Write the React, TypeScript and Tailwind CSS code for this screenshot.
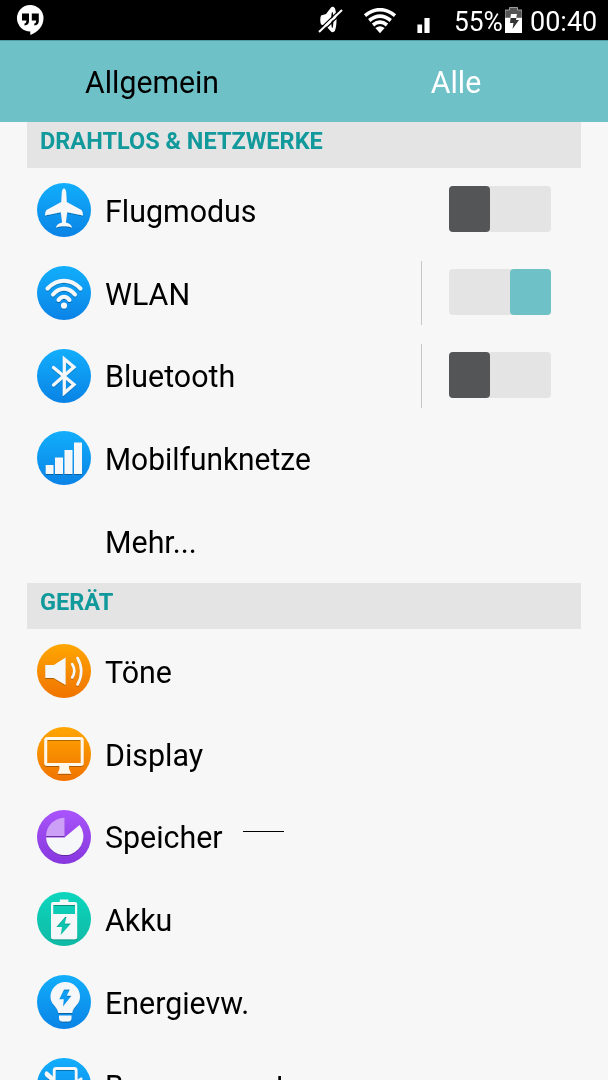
import type { ReactNode } from "react";

interface SettingRowProps {
    label: string;
    icon?: ReactNode;
    toggle?: "on" | "off";
    divider?: boolean;
    condensed?: boolean;
    children?: ReactNode;
}

const gradients = {
    blue: ["#12aefc", "#0a83e6"],
    orange: ["#ffa602", "#f07300"],
    purple: ["#a955fb", "#8637dd"],
    green: ["#0cd6be", "#10b9a5"],
};

function RoundIcon({ color, children }: { color: keyof typeof gradients; children: ReactNode }) {
    const [from, to] = gradients[color];
    return (
        <svg viewBox="0 0 54 54" className="h-[54px] w-[54px] shrink-0">
            <defs>
                <linearGradient id={`disc-${color}`} x1="0" y1="0" x2="0" y2="1">
                    <stop offset="0" stopColor={from} />
                    <stop offset="1" stopColor={to} />
                </linearGradient>
                <filter id="drop" x="-20%" y="-20%" width="140%" height="140%">
                    <feDropShadow dx="0" dy="1" stdDeviation="0.6" floodColor="#000" floodOpacity="0.3" />
                </filter>
            </defs>
            <circle cx="27" cy="27" r="27" fill={`url(#disc-${color})`} />
            <g filter="url(#drop)" fill="#f5f7f9">{children}</g>
        </svg>
    );
}

const PlaneIcon = () => (
    <RoundIcon color="blue">
        <path d="M27 5.500c1.400 0 2.200 2 2.300 5l.5 8.500L44 26.700c1.300.8 1.900 2.400 1.900 5.800L30.200 29.300 28.900 39.500c3.400.8 5.500 2 6.200 5.200-2.600-1-5.300-1.400-8.100-1.400s-5.500.4-8.100 1.400c.7-3.200 2.800-4.400 6.200-5.200L23.800 29.300 8.100 32.500c0-3.400.6-5 1.900-5.800L24.200 19l.5-8.500c.1-3 .9-5 2.300-5z" />
    </RoundIcon>
);

const WlanIcon = () => (
    <RoundIcon color="blue">
        <g fill="none" stroke="#f5f7f9" strokeWidth="4" strokeLinecap="round">
            <path d="M10.500 22.500Q18 14.800 27 14.800T43.500 22.500" />
            <path d="M16 28.500Q21 22.800 27 22.800T38 28.500" />
            <path d="M21.500 34Q24 30.800 27 30.800T32.500 34" />
        </g>
        <circle cx="27" cy="39.500" r="3.100" />
    </RoundIcon>
);

const BluetoothIcon = () => (
    <RoundIcon color="blue">
        <path d="M16.500 18.500L37 35.500 27.300 44V10L37 18 16.500 36" fill="none" stroke="#f5f7f9" strokeWidth="3.200" strokeLinejoin="miter" strokeLinecap="round" />
    </RoundIcon>
);

const MobileIcon = () => (
    <RoundIcon color="blue">
        <path d="M8.700 34h7.800v9H8.700zM18 26.500h8V43h-8zM27.500 19h8v24h-8zM37 11.500h8V43h-8z" />
    </RoundIcon>
);

const SoundIcon = () => (
    <RoundIcon color="orange">
        <path d="M8.300 21h8.500L28.600 13.500v27.500L16.800 34H8.300z" />
        <g fill="none" stroke="#f5f7f9" strokeWidth="2.600" strokeLinecap="round">
            <path d="M35.200 20q4.200 7 0 13.500" />
            <path d="M40.500 14q7.500 13.300 0 26.500" />
        </g>
    </RoundIcon>
);

const DisplayIcon = () => (
    <RoundIcon color="orange">
        <rect x="8.700" y="11.500" width="36.500" height="26" rx="1.500" fill="none" stroke="#fff8ea" strokeWidth="3" />
        <path d="M22.500 38h9.500v4l2.300 4.800H20.500l2-4.800z" fill="#fff8ea" />
    </RoundIcon>
);

const StorageIcon = () => (
    <RoundIcon color="purple">
        <path d="M27.500 7.800V26H9A18.500 18.500 0 0 1 27.500 7.800z" fill="#cda0f8" />
        <path d="M9 27.500h18.500L42.500 15A18.700 18.700 0 1 1 9 27.500z" />
    </RoundIcon>
);

const BatteryIcon = () => (
    <RoundIcon color="green">
        <path fillRule="evenodd" d="M22.800 10V7.500h8.600V10h6.800q2 0 2 2v33.200q0 2-2 2H16q-2 0-2-2V12q0-2 2-2zM16.200 13v9h21.800v-9zM28 25l-8.700 10h5.700l-1.300 8L34 31.500h-6.200l1.700-6.500z" />
    </RoundIcon>
);

const BulbIcon = () => (
    <RoundIcon color="blue">
        <path fillRule="evenodd" d="M28 7A14.700 14.700 0 0 1 43 21.700c0 8-7 9.500-7.800 16.300H21.300c-.7-6.800-7.800-8.300-7.800-16.300A14.700 14.700 0 0 1 28 7zM27 14.500l-4.700 9.800h4.500l-.8 7.200 8.500-10.700h-4.700l3-6.300z" />
        <path d="M22 40.500h12.500V43q0 3.500-3.500 3.500h-5.500Q22 46.500 22 43z" />
    </RoundIcon>
);

const MotionIcon = () => (
    <RoundIcon color="blue">
        <rect x="17.200" y="10.500" width="22" height="34" rx="2" fill="none" stroke="#f5f7f9" strokeWidth="2.800" />
        <path d="M8 14.500q1-2 3-.5l5 4.500v6L8.800 18.500q-1.800-2-.8-4zM40.500 21.500l3-2q2.500-.5 2 2l-5 6z" />
    </RoundIcon>
);

function Toggle({ state }: { state: "on" | "off" }) {
    return (
        <div className={`mb-[2px] flex h-[46px] w-[102px] rounded-[4px] bg-[#e4e4e4] ${state === "on" ? "justify-end" : "justify-start"}`}>
            <div className={`h-full w-[41px] rounded-[4px] ${state === "on" ? "bg-[#6dc1c7]" : "bg-[#545557]"}`} />
        </div>
    );
}

function SettingRow({ label, icon, toggle, divider, condensed, children }: SettingRowProps) {
    return (
        <div className="flex h-[82.75px] items-center pr-[57px] pl-[37px]">
            <div className="w-[54px] shrink-0">{icon}</div>
            <span className={`ml-[14px] origin-left pt-[4px] text-[31px] whitespace-nowrap text-black ${condensed ? "scale-x-[0.965]" : "scale-x-[0.98]"}`}>{label}</span>
            {children}
            <div className="ml-auto flex items-center">
                {divider && <div className="mr-[27px] h-[64px] w-px bg-[#c6c6c6]" />}
                {toggle && <Toggle state={toggle} />}
            </div>
        </div>
    );
}

function SectionHeader({ title }: { title: string }) {
    return (
        <div className="mr-[27px] ml-[27px] flex h-[46px] items-start bg-[#e4e4e4] pl-[13px]">
            <span className="origin-left scale-x-[0.98] pt-[2px] text-[24px] leading-[34px] font-bold whitespace-nowrap text-[#12999b]">{title}</span>
        </div>
    );
}

function StatusBar() {
    return (
        <div className="flex h-[40px] items-center bg-black text-white">
            <svg viewBox="0 0 28 32" className="ml-[16px] h-[32px] w-[28px]">
                <path d="M14 1a13.300 13.300 0 0 1 13.500 13.300C27.500 22 22 28.500 14.300 31v-3.600A13.200 13.200 0 0 1 14 1z" fill="#fff" />
                <path d="M6 9.500h7v7.500q0 4-4.500 4.500v-2q2-.5 2-3H6zM15.800 9.500h7v7.500q0 4-4.500 4.500v-2q2-.5 2-3h-4.500z" fill="#000" />
            </svg>
            {/* muted ringer */}
            <svg viewBox="0 0 26 28" className="ml-[274px] h-[28px] w-[26px]">
                <path d="M3 9.500l5-1.500 5-6.500c1-1 3-1 4 1 2 6 2 17 0 22-1 2-3 2-4 1L8 20l-5-1.500c-1-3-1-6 0-9z" fill="#fff" />
                <ellipse cx="14.300" cy="14" rx="1.100" ry="8" fill="#000" />
                <path d="M0 24.500L23 2.500M2.500 27.500L25.500 5.500" stroke="#000" strokeWidth="1.200" />
                <path d="M1 26L24 4" stroke="#fff" strokeWidth="2" />
            </svg>
            <svg viewBox="0 0 34 26" className="mt-[2px] ml-[19px] h-[26px] w-[34px]">
                <g fill="none" stroke="#fff" strokeWidth="3.600">
                    <path d="M2 7.600Q17-4.200 32 7.600" />
                    <path d="M6.200 12.500Q17 3.900 27.800 12.500" />
                    <path d="M10 17Q17 11.400 24 17" />
                </g>
                <path d="M12.400 20Q17 16.700 21.600 20L17 25.200z" fill="#fff" />
            </svg>
            <svg viewBox="0 0 13 16" className="mt-[11px] ml-[20px] h-[15px] w-[13px]">
                <path d="M0 7h5v9H0zM7.500 0H13v16H7.500z" fill="#fff" />
            </svg>
            <span className="ml-[24px] w-[51px] text-[28px] whitespace-nowrap">
                <span className="inline-block origin-left scale-x-[0.94] pt-[4px]">55%</span>
            </span>
            <svg viewBox="0 0 17 26" className="h-[26px] w-[17px]">
                <path d="M4.500 3V.5h8V3H17v8H0V3z" fill="#555" stroke="#bbb" strokeWidth=".8" />
                <path d="M0 11h17v15H0z" fill="#fff" />
                <path d="M6 7h6l-1 6h3L7.500 22l1-6H5z" fill="#333" />
                <path d="M6 7h6l-.7 4H5.300z" fill="#fff" />
            </svg>
            <span className="ml-[8px] origin-left scale-x-[0.965] pt-[4px] text-[28px] whitespace-nowrap">00:40</span>
        </div>
    );
}

export default function App() {
    return (
        <div className="flex h-[1080px] w-[608px] flex-col overflow-hidden bg-[#f7f7f7] font-['Roboto','Liberation_Sans',sans-serif]">
            <StatusBar />
            <nav className="grid h-[82px] shrink-0 grid-cols-2 border-t border-[#4f9ca1] bg-[#6dc1c7] text-center text-[31px] leading-[84px]">
                <span className="scale-x-[0.975] text-black">Allgemein</span>
                <span className="scale-x-[0.975] text-white">Alle</span>
            </nav>
            <main className="shrink-0">
                <SectionHeader title="DRAHTLOS & NETZWERKE" />
                <section className="pt-[0.7px] pb-[0.55px]">
                    <SettingRow label="Flugmodus" icon={<PlaneIcon />} toggle="off" />
                    <SettingRow label="WLAN" icon={<WlanIcon />} toggle="on" divider />
                    <SettingRow label="Bluetooth" icon={<BluetoothIcon />} toggle="off" divider />
                    <SettingRow label="Mobilfunknetze" icon={<MobileIcon />} condensed />
                    <SettingRow label="Mehr..." />
                </section>
                <SectionHeader title="GERÄT" />
                <section className="pt-[0.7px]">
                    <SettingRow label="Töne" icon={<SoundIcon />} />
                    <SettingRow label="Display" icon={<DisplayIcon />} />
                    <SettingRow label="Speicher" icon={<StorageIcon />}>
                        <div className="mb-[10px] ml-[18px] h-px w-[41px] bg-black" />
                    </SettingRow>
                    <SettingRow label="Akku" icon={<BatteryIcon />} />
                    <SettingRow label="Energievw." icon={<BulbIcon />} />
                    <SettingRow label="Bewegungsst." icon={<MotionIcon />} condensed />
                </section>
            </main>
        </div>
    );
}
